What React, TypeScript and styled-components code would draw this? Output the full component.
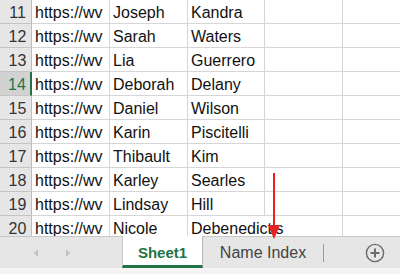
import React from "react";
import styled, { createGlobalStyle } from "styled-components";

const rows = [
  { n: 11, first: "Joseph", last: "Kandra" },
  { n: 12, first: "Sarah", last: "Waters" },
  { n: 13, first: "Lia", last: "Guerrero" },
  { n: 14, first: "Deborah", last: "Delany" },
  { n: 15, first: "Daniel", last: "Wilson" },
  { n: 16, first: "Karin", last: "Piscitelli" },
  { n: 17, first: "Thibault", last: "Kim" },
  { n: 18, first: "Karley", last: "Searles" },
  { n: 19, first: "Lindsay", last: "Hill" },
  { n: 20, first: "Nicole", last: "Debenedictis" },
];

const GREEN = "#217346";

const App = () => {
  return (
    <Page>
      <GlobalStyle />
      <Grid>
        {rows.map((r) => {
          const active = r.n === 14;
          const overflow = r.n === 20;
          return (
            <Row key={r.n}>
              <RowHead active={active}>{r.n}</RowHead>
              <Cell width={78}>https://wv</Cell>
              <Cell width={78}>{r.first}</Cell>
              <Cell width={77} noRight={overflow} overflow={overflow}>
                {r.last}
              </Cell>
              <Cell width={78} />
              <Cell width={60}>{active && <Selection />}</Cell>
            </Row>
          );
        })}
      </Grid>
      <TabBar>
        <Nav>
          <Arrow dir="left" />
          <Arrow dir="right" />
        </Nav>
        <ActiveTab>Sheet1</ActiveTab>
        <Tab>Name Index</Tab>
        <Divider />
        <AddButton>
          <svg width="20" height="20" viewBox="0 0 20 20">
            <circle cx="10" cy="10" r="8.6" fill="none" stroke="#6b6b6b" strokeWidth="1.4" />
            <path d="M10 5.5v9M5.5 10h9" stroke="#6b6b6b" strokeWidth="2" />
          </svg>
        </AddButton>
      </TabBar>
      <BottomStrip />
      <Pointer>
        <svg width="16" height="70" viewBox="0 0 16 70">
          <path d="M8 0v56" stroke="#e32222" strokeWidth="2" />
          <path d="M2 52 L8 66 L14 52 Z" fill="#e32222" />
        </svg>
      </Pointer>
    </Page>
  );
};

const GlobalStyle = createGlobalStyle`
  html, body {
    margin: 0;
    padding: 0;
    background: #ffffff;
  }
`;

const Page = styled.div`
  position: relative;
  width: 400px;
  height: 274px;
  overflow: hidden;
  font-family: "Liberation Sans", Arial, sans-serif;
  display: flex;
  flex-direction: column;
`;

const Grid = styled.div`
  height: 236px;
  overflow: hidden;
  display: flex;
  flex-direction: column;
`;

const Row = styled.div`
  display: flex;
  flex: none;
  height: 24px;
`;

const RowHead = styled.div<{ active?: boolean }>`
  box-sizing: border-box;
  width: 32px;
  flex: none;
  height: 24px;
  background: ${(p) => (p.active ? "#d2d2d2" : "#e6e6e6")};
  color: ${(p) => (p.active ? GREEN : "#333")};
  border-bottom: 1px solid #c4c4c4;
  border-right: ${(p) => (p.active ? `2px solid ${GREEN}` : "1px solid #bdbdbd")};
  font-size: 16px;
  line-height: 25px;
  text-align: center;
  padding-left: 4px;
`;

const Cell = styled.div<{ width: number; noRight?: boolean; overflow?: boolean }>`
  position: relative;
  box-sizing: border-box;
  width: ${(p) => p.width}px;
  flex: none;
  height: 24px;
  border-bottom: 1px solid #d6d6d6;
  border-right: 1px solid ${(p) => (p.noRight ? "transparent" : "#d6d6d6")};
  padding: 0 0 0 3px;
  font-size: 16px;
  line-height: 25px;
  color: #111;
  white-space: nowrap;
  overflow: ${(p) => (p.overflow ? "visible" : "hidden")};
`;

const Selection = styled.div`
  position: absolute;
  left: -2px;
  top: -2px;
  right: -4px;
  bottom: -2px;
  border: 2px solid ${GREEN};
`;

const TabBar = styled.div`
  box-sizing: border-box;
  height: 32px;
  flex: none;
  background: #e6e6e6;
  border-top: 1px solid #c8c8c8;
  display: flex;
  align-items: stretch;
`;

const Nav = styled.div`
  width: 122px;
  flex: none;
  display: flex;
  align-items: center;
  gap: 28px;
  padding-left: 34px;
  box-sizing: border-box;
`;

const Arrow = styled.div<{ dir: "left" | "right" }>`
  width: 0;
  height: 0;
  border-top: 4px solid transparent;
  border-bottom: 4px solid transparent;
  ${(p) =>
    p.dir === "left"
      ? "border-right: 4px solid #c2c2c2;"
      : "border-left: 4px solid #c2c2c2;"}
`;

const ActiveTab = styled.div`
  box-sizing: border-box;
  width: 81px;
  flex: none;
  margin-top: -1px;
  background: #ffffff;
  border-left: 1px solid #c8c8c8;
  border-right: 1px solid #b8b8b8;
  border-bottom: 3px solid ${GREEN};
  color: ${GREEN};
  font-weight: bold;
  font-size: 15px;
  display: flex;
  align-items: center;
  justify-content: center;
  padding-top: 3px;
`;

const Tab = styled.div`
  width: 120px;
  flex: none;
  color: #444;
  font-size: 16px;
  display: flex;
  align-items: center;
  justify-content: center;
  padding-top: 1px;
`;

const Divider = styled.div`
  width: 1px;
  background: #9a9a9a;
  margin: 7px 0 6px 0;
`;

const AddButton = styled.div`
  flex: 1;
  display: flex;
  align-items: center;
  justify-content: flex-start;
  padding-left: 41px;
`;

const BottomStrip = styled.div`
  flex: 1;
  background: #f4f4f4;
`;

const Pointer = styled.div`
  position: absolute;
  left: 266px;
  top: 173px;
  width: 16px;
  height: 70px;
`;

export default App;
